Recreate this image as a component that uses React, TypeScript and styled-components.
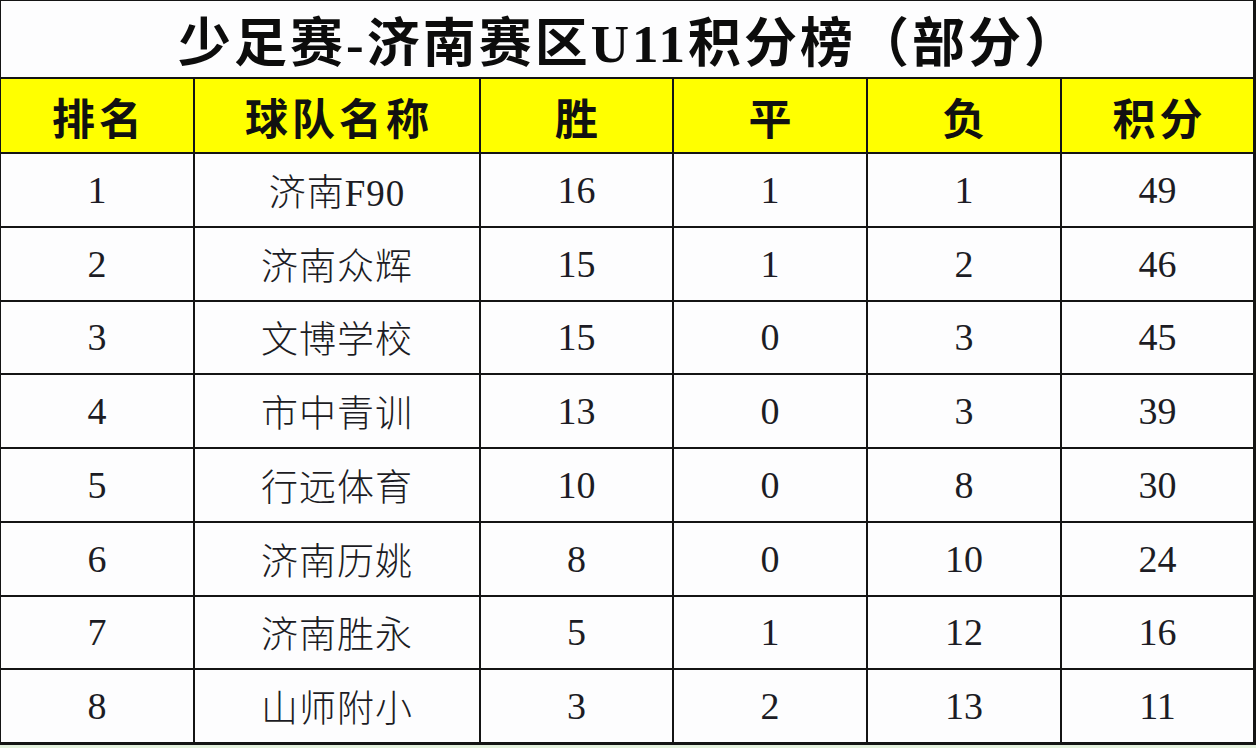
import styled, { createGlobalStyle } from 'styled-components';

const GlobalStyle = createGlobalStyle`
	html, body {
		margin: 0;
		padding: 0;
		background: #ffffff;
	}
	body {
		width: 1258px;
		height: 748px;
		overflow: hidden;
	}
`;

type Team = {
	rank: number;
	name: string;
	win: number;
	draw: number;
	loss: number;
	points: number;
};

const teams: Team[] = [
	{ rank: 1, name: '济南F90', win: 16, draw: 1, loss: 1, points: 49 },
	{ rank: 2, name: '济南众辉', win: 15, draw: 1, loss: 2, points: 46 },
	{ rank: 3, name: '文博学校', win: 15, draw: 0, loss: 3, points: 45 },
	{ rank: 4, name: '市中青训', win: 13, draw: 0, loss: 3, points: 39 },
	{ rank: 5, name: '行远体育', win: 10, draw: 0, loss: 8, points: 30 },
	{ rank: 6, name: '济南历姚', win: 8, draw: 0, loss: 10, points: 24 },
	{ rank: 7, name: '济南胜永', win: 5, draw: 1, loss: 12, points: 16 },
	{ rank: 8, name: '山师附小', win: 3, draw: 2, loss: 13, points: 11 },
];

const headers = ['排名', '球队名称', '胜', '平', '负', '积分'];

export default function App() {
	return (
		<>
			<GlobalStyle />
			<Sheet>
				<Title>少足赛-济南赛区U11积分榜（部分）</Title>
				{headers.map((h) => (
					<HeadCell key={h}>{h}</HeadCell>
				))}
				{teams.map((t) => (
					<Row key={t.rank} team={t} />
				))}
			</Sheet>
			<BottomStrip />
		</>
	);
}

function Row({ team }: { team: Team }) {
	return (
		<>
			<Cell>{team.rank}</Cell>
			<Cell $cjk>{team.name}</Cell>
			<Cell>{team.win}</Cell>
			<Cell>{team.draw}</Cell>
			<Cell>{team.loss}</Cell>
			<Cell>{team.points}</Cell>
		</>
	);
}

const Sheet = styled.div`
	display: grid;
	grid-template-columns: 192px 284px 191px 192px 192px 191px;
	grid-template-rows: 76px 73px repeat(8, 71.75px);
	gap: 2px;
	padding: 1px 3px 3px 1px;
	width: max-content;
	background: #141414;
`;

const Title = styled.div`
	grid-column: 1 / -1;
	display: flex;
	align-items: center;
	justify-content: center;
	padding-left: 4px;
	background: #fdfdfe;
	color: #0c0c0c;
	font-family: 'Liberation Serif', 'Noto Sans CJK SC', serif;
	font-weight: 700;
	font-size: 53px;
	letter-spacing: 3px;
`;

const HeadCell = styled.div`
	display: flex;
	align-items: center;
	justify-content: center;
	background: #ffff00;
	color: #111111;
	font-family: 'Noto Sans CJK SC', sans-serif;
	font-weight: 700;
	font-size: 43px;
	letter-spacing: 4px;
	text-indent: 4px;
`;

const Cell = styled.div<{ $cjk?: boolean }>`
	display: flex;
	align-items: center;
	justify-content: center;
	background: #fdfdfe;
	color: #1c1c24;
	font-family: 'Liberation Serif', 'Noto Sans CJK SC', serif;
	font-weight: ${(p) => (p.$cjk ? 300 : 400)};
	font-size: ${(p) => (p.$cjk ? '37px' : '38px')};
	letter-spacing: ${(p) => (p.$cjk ? '1px' : '0')};
`;

const BottomStrip = styled.div`
	width: 1256px;
	height: 3px;
	background: #e2f0dc;
`;
